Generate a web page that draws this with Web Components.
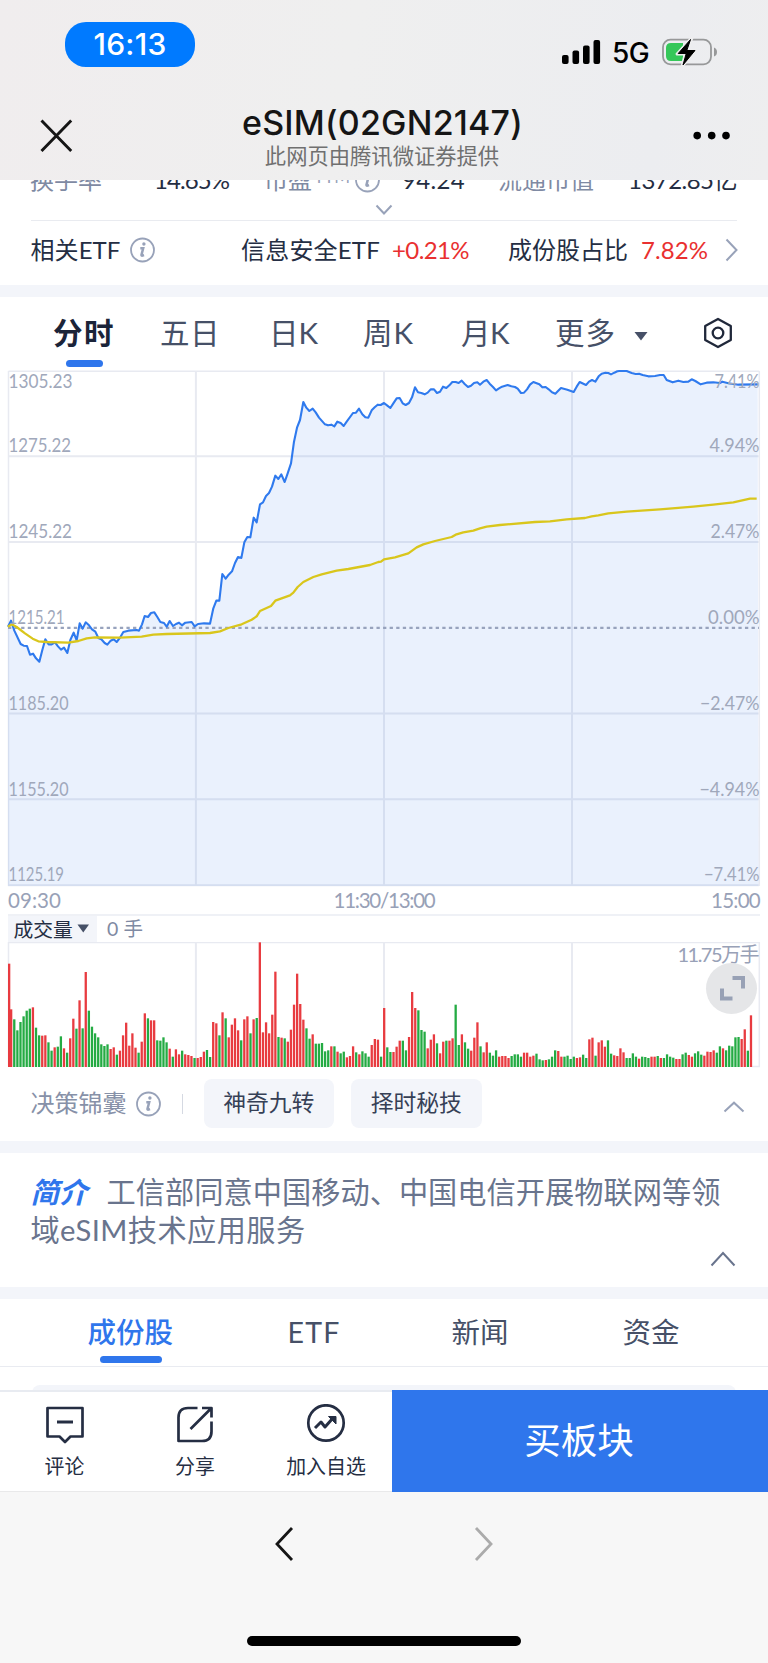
<!DOCTYPE html>
<html lang="zh-CN">
<head>
<meta charset="utf-8">
<title>eSIM(02GN2147)</title>
<style>
html,body{margin:0;padding:0}
body{width:768px;height:1663px;overflow:hidden;background:#fff;font-family:Lato,"Noto Sans CJK SC",sans-serif;color:#252e43}
</style>
</head>
<body>
<quote-page></quote-page>
<script>
const define = (name, html, init) => {
  const t = document.createElement('template');
  t.innerHTML = html;
  customElements.define(name, class extends HTMLElement {
    connectedCallback() {
      if (this.shadowRoot) return;
      this.attachShadow({mode: 'open'}).append(t.content.cloneNode(true));
      if (init) init.call(this, this.shadowRoot);
    }
  });
};

// A single line of text whose tracking is adjusted to an advance width (w).
define('fit-text', `<style>:host{display:block;white-space:nowrap;line-height:1.3}span{display:inline-block;white-space:pre}</style><span><slot></slot></span>`, function (r) {
  const w = +this.getAttribute('w');
  if (!w) return;
  const s = r.querySelector('span'), n = this.textContent.length;
  s.style.letterSpacing = (w - s.getBoundingClientRect().width) / n + 'px';
});

define('info-icon', `<style>:host{display:block;width:26px;height:26px;color:#98a2b9}svg{display:block}</style>
<svg width="26" height="26" viewBox="0 0 26 26" fill="none" stroke="currentColor"><circle cx="12.500" cy="13" r="11.5" stroke-width="1.8"/><circle cx="13.900" cy="7" r="1.700" fill="currentColor" stroke="none"/><path d="M10.300 11.200h2.900l-1.700 6.500q-.2 1.200 1 .9l1.500-.6" stroke-width="2.500"/></svg>`);

define('status-bar', `<style>
:host{display:flex;height:96px;justify-content:space-between;align-items:flex-start;padding:21.500px 51px 0 65px;box-sizing:border-box;font-family:Inter,sans-serif;color:#000}
.time{width:130px;height:45px;border-radius:21px;background:#007aff;color:#fff;display:flex;align-items:center;justify-content:center;font-size:30px;font-weight:500}
.r{display:flex;align-items:center;margin-top:15px;height:30px}
.g{margin-left:11px;margin-right:13px;font-size:28px;font-weight:500;margin-top:3px}
svg{display:block}
</style>
<div class="time"><fit-text w="73">16:13</fit-text></div>
<div class="r">
<svg width="40" height="26" viewBox="0 0 40 26"><rect x="1" y="16" width="6.6" height="9" rx="2"/><rect x="11.5" y="11.5" width="6.6" height="13.5" rx="2"/><rect x="22" y="6.5" width="6.6" height="18.5" rx="2"/><rect x="32.5" y="1" width="6.6" height="24" rx="2"/></svg>
<div class="g"><fit-text w="37">5G</fit-text></div>
<svg width="55" height="30" viewBox="0 0 55 30"><rect x="1" y="2.7" width="48" height="24.6" rx="7.5" fill="none" stroke="#979899" stroke-width="1.8"/><path d="M52 10.5q3 1 3 4.5t-3 4.5z" fill="#979899"/><path d="M9 6h12v18H9q-5 0-5-5v-8q0-5 5-5z" fill="#35c759"/><path d="M29.8 1 15.2 17h8.2L20.2 29 33.2 13.5h-8z" stroke="#eeeeef" stroke-width="3.2" stroke-linejoin="round"/><path d="M28.5 2.5 16.2 16.5h8L21 28 33 13.5h-8.2z" stroke="#000" stroke-linejoin="round"/></svg>
</div>`);

define('nav-bar', `<style>
:host{display:grid;grid-template-columns:92px 1fr 92px;height:84px;color:#151515}
.t{display:flex;flex-direction:column;align-items:center;font-family:Inter,"Noto Sans CJK SC",sans-serif;padding-top:5px}
.t .a{font-size:34px;font-weight:450;line-height:43px;height:43px;margin-left:-3px}.t .a fit-text{line-height:43px}
.t .b{font-size:21.3px;color:#707070;line-height:28px;margin-top:-2px;margin-left:-4px}
svg{display:block}
</style>
<svg width="92" height="84"><path d="M41.5 24.500l29.700 30.5M71.2 24.500l-29.700 30.5" stroke="#151515" stroke-width="2.9" fill="none"/></svg>
<div class="t"><div class="a"><fit-text w="281">eSIM(02GN2147)</fit-text></div><div class="b">此网页由腾讯微证券提供</div></div>
<svg width="92" height="84"><circle cx="21.2" cy="39.6" r="3.8"/><circle cx="35.7" cy="39.6" r="3.8"/><circle cx="50" cy="39.6" r="3.8"/></svg>`);

define('quote-summary', `<style>
:host{display:block;height:104.500px;overflow:hidden;padding:0 31px;box-sizing:border-box;font-size:24px}
.row{display:grid;align-items:center;height:36px}
.m{grid-template-columns:123px 111px 49px 41px 47px 97px 129px auto;margin-top:-18px}
.m .k{color:#7f8aa3;margin-left:-1px}
.m sup{font-size:17px;line-height:17px;align-self:start;color:#98a2b9;margin-top:5.500px}
.m fit-text,.e fit-text{line-height:36px}
.fold{display:flex;justify-content:center;height:22px;padding-top:5px;box-sizing:border-box;margin-top:0}
.fold svg{margin-top:1px}
hr{border:0;border-top:1.5px solid #e9ebf0;margin:0;height:0}
.e{grid-template-columns:99px 111px 151px 116px 133px 84px auto;margin-top:10.500px}
.e fit-text:first-child{margin-left:-.5px}
.red{color:#e93030}
svg{display:block}
</style>
<div class="row m"><fit-text class="k">换手率</fit-text><fit-text w="75">14.65%</fit-text><fit-text class="k">市盈</fit-text><sup><fit-text w="36" style="line-height:17px">TTM</fit-text></sup><info-icon></info-icon><fit-text w="63">94.24</fit-text><fit-text class="k">流通市值</fit-text><fit-text w="109">1372.85亿</fit-text></div>
<div class="fold"><svg width="18" height="12" viewBox="0 0 18 12"><path d="M1.5 1.5 9 9.500l7.500-8" fill="none" stroke="#98a2b9" stroke-width="2"/></svg></div>
<hr>
<div class="row e"><fit-text w="90">相关ETF</fit-text><info-icon></info-icon><fit-text w="139">信息安全ETF</fit-text><fit-text class="red" w="77">+0.21%</fit-text><fit-text>成份股占比</fit-text><fit-text class="red" w="67">7.82%</fit-text><svg width="14" height="24" viewBox="0 0 14 24"><path d="M1.500 1.500 11.500 12l-10 10.500" fill="none" stroke="#98a2b9" stroke-width="2"/></svg></div>`);

define('section-gap', `<style>:host{display:block;height:12.500px;background:#f3f5fa}</style>`);

define('period-tabs', `<style>
:host{display:grid;height:73px;box-sizing:border-box;padding-left:53px;grid-template-columns:107px 109px 94px 98px 94px 76px 69px auto;font-size:29.5px;color:#465067;align-items:start}
fit-text{line-height:71px}
.on{color:#1b2439;font-weight:600;position:relative}
.on i{position:absolute;left:13px;top:63px;width:37px;height:6.500px;border-radius:3.500px;background:#2f76ec}
svg{display:block}
</style>
<div class="on"><fit-text w="62">分时</fit-text><i></i></div><fit-text w="60">五日</fit-text><fit-text w="49">日K</fit-text><fit-text w="51">周K</fit-text><fit-text w="48">月K</fit-text><fit-text w="61">更多</fit-text>
<svg width="20" height="72"><path d="M3.500 35h13l-6.500 8.500z" fill="#465067"/></svg>
<svg width="36" height="72" viewBox="0 0 36 72" fill="none" stroke="#20283a" stroke-width="2.300" stroke-linejoin="round"><path d="M18 22 30.800 29v14L18 50 5.200 43v-14z"/><circle cx="18" cy="36" r="5.300"/></svg>`);

// Line samples: offsets are kept at a third of a pixel.
const series = parts => parts.map(([dx, s]) => s.split(' ').map(p => {
  const [x, y] = p.split(',');
  return ((+x + dx) / 3).toFixed(2) + ',' + (+y / 3 + 360).toFixed(2);
}).join(' ')).join(' ');
const price = series([
[0,'24,800 33,782 43,812 62,852 71,857 81,858 90,884 99,881 108,895 118,905 127,870 136,838 146,853 155,853 165,847 174,859 183,869 192,863 202,879 211,840 221,818 230,841 239,790 248,806 257,787 267,796 276,808 286,815 295,834 304,838 314,849 322,854 332,842 341,838 350,846 360,833 370,816 385,812 410,810 417,812 426,793 434,768 444,771 453,759 463,757 472,771 481,786 492,789 500,800 509,783 519,798 528,792 537,788 546,796 556,788 575,786 584,799 594,792 612,790 630,791 640,745 649,722 658,722 667,642 677,656 686,644 696,634 705,609 714,591 724,594 733,547 742,531 751,532 761,473 770,487'],
[600,'180,433 189,427 198,408 207,399 216,380 226,347 235,357 244,343 254,366 263,340 273,310 282,245 291,203 300,180 310,126 319,143 328,153 338,146 347,157 357,173 375,193 384,196 394,194 403,199 412,185 422,189 431,198 440,185 459,159 468,158 477,146 487,163 496,172 505,173 515,151 524,142 533,134 542,135 552,129 562,137 571,144 580,130 590,115 599,114 608,130 617,135 627,129 636,112 645,82 654,97 664,99 674,103 683,98 692,88 702,88 711,99 720,95 729,80 739,84 748,76 757,66 767,66 776,69 785,62 794,72 804,81 813,77 822,69 832,67 840,74'],
[1380,'70,65 80,60 89,71 99,81 108,91 117,85 126,80 143,75 154,79 165,81 173,86 183,99 192,98 201,88 210,74 220,66 230,70 238,73 247,82 257,81 266,88 276,97 286,101 294,93 303,84 322,89 341,96 350,80 359,66 378,75 387,65 396,60 406,65 416,49 425,41 436,38 445,39 453,43 463,38 472,34 485,32 500,33 515,39 527,42 537,41 548,45 565,49 585,48 600,45 611,45 620,60 638,67 655,62 670,66 685,65 695,58 706,63 722,73 740,68 760,67 780,69 787,65 805,70 835,74 893,73']]);
const average = series([
[0,'24,800 35,793 50,801 75,820 98,836 115,844 140,846 205,848 235,843 260,835 285,832 360,833 425,830 460,824 500,822 630,819 660,814 685,804 725,793 755,779 770,769'],
[600,'180,753 213,738 226,722 270,706 280,698 293,681 310,666 340,651 365,643 410,632 445,627 510,615 535,606 543,605 552,598 585,592 625,580 650,562 670,553 705,543 755,531 767,524 790,517 820,512 840,505'],
[1380,'80,500 120,495 225,486 270,484 320,478 375,474 395,469 415,466 445,460 500,455 600,448 700,440 760,434 820,427 870,416 890,416']]);

define('price-chart', `<style>:host{display:block;height:517px}svg{display:block}text{font-family:Lato,sans-serif;font-size:19px;fill:#a0a8bb}</style><svg width="768" height="517" viewBox="0 370 768 517"></svg>`, function (r) {
  const ys = [388, 452, 538, 623.5, 710, 795.5, 881];
  const L = [['1305.23',64],['1275.22',62.500],['1245.22',63.500],['1215.21',56],['1185.20',60],['1155.20',60],['1125.19',55.500]];
  const R = [['7.41%',45],['4.94%',50],['2.47%',49],['0.00%',51.500],['−2.47%',59.500],['−4.94%',60],['−7.41%',55.500]];
  let s = '<g stroke="#e8eaf1" fill="none"><path stroke-width="1.500" d="M8.500 371.200H759.300M8.500 371V886M759.300 371V886"/><path stroke-width="2" d="M8 456.300H759M8 542H759M8 713.500H759M8 799.300H759M8 885.300H759M195.900 371V885M384 371V885M572 371V885"/></g>';
  s += `<polygon points="8,886 ${price} 758.500,886" fill="#2f76ec" fill-opacity=".1"/>`;
  s += '<path d="M8 627.800H759" stroke="#98a3bd" stroke-width="2.200" stroke-dasharray="3.300 3.280" fill="none"/>';
  s += `<polyline points="${price}" fill="none" stroke="#2f7aee" stroke-width="2.100" stroke-linejoin="round"/><polyline points="${average}" fill="none" stroke="#d9c61c" stroke-width="2.300" stroke-linejoin="round"/>`;
  L.forEach(([t, w], i) => s += `<text x="8.500" y="${ys[i]}" textLength="${w}" lengthAdjust="spacingAndGlyphs">${t}</text>`);
  R.forEach(([t, w], i) => s += `<text x="${759.5 - w}" y="${ys[i]}" textLength="${w}" lengthAdjust="spacingAndGlyphs">${t}</text>`);
  r.querySelector('svg').innerHTML = s;
});

define('time-axis', `<style>:host{display:grid;grid-template-columns:1fr auto 1fr;height:27px;padding:0 8px;font-size:20.500px;color:#98a1b7}fit-text{line-height:27px}fit-text:last-child{justify-self:end}</style>
<fit-text w="53">09:30</fit-text><fit-text w="101">11:30/13:00</fit-text><fit-text w="49">15:00</fit-text>`);

define('volume-head', `<style>:host{display:flex;height:28px;margin:0 8px;box-sizing:border-box;border-top:2px solid #eff1f6;font-size:19.800px}
.k{display:flex;align-items:center;width:89px;box-sizing:border-box;padding-left:5.500px;background:#f3f5fa}
.v{margin-left:10px;color:#7f8aa3;font-size:19.500px}fit-text{line-height:25px}</style>
<div class="k"><fit-text>成交量</fit-text><svg width="16" height="12"><path d="M4.500 1.500h11.500l-5.750 8z" fill="#465067"/></svg></div><fit-text class="v" w="36">0 手</fit-text>`);

// One entry per minute: r = rise, g = fall, followed by the bar top in thirds of a pixel.
const bars = 'r101 r238 g268 g301 g276 g259 g242 g236 r232 g293 g316 r317 r316 g337 g362 r352 g350 g319 r355 g368 r325 r266 g296 r211 g295 r126 g242 g290 g310 g322 g343 g348 g343 r357 r352 g374 r362 r316 r278 r347 r310 r353 g368 r335 r250 g265 r271 r271 g331 g332 g322 g337 r356 g380 r358 r373 g362 r373 r375 r378 g384 r384 r381 r365 g360 g381 r276 r280 g316 r247 g265 r322 r284 r265 r301 g331 r268 r259 g310 r268 g264 r37 r307 r277 r310 r254 r125 g321 r323 g325 r335 r299 r224 r131 r222 r269 g295 g326 r313 g341 g341 g339 g364 g361 r349 g349 r365 g370 g365 r382 r378 r349 g367 r373 g364 g370 g380 r345 r327 r329 g380 r234 g352 g366 r366 r350 r332 g332 g361 r321 r186 r234 g241 g300 g305 r355 r329 r313 g340 r370 r335 g332 r332 r325 g224 g345 r313 g337 g356 r362 r323 r277 g349 r367 r337 g368 g377 g361 r380 r378 r378 r384 g378 g373 g373 g380 r368 r368 r380 r377 g371 g388 g391 r390 g388 g380 g361 r363 r380 g380 g377 g387 g380 r384 r382 g374 g384 r328 r323 g377 r337 r331 r350 g331 g371 r376 r378 r355 r367 g384 g384 g370 g380 r386 g380 g381 g384 r380 r380 g378 r384 g384 g373 g380 g383 r387 r387 g373 g368 r375 r380 g370 g364 g374 r377 r365 r366 r361 g368 g349 r355 g361 g347 g349 g322 g321 r327 r298 g362 r256'.split(' ');

define('volume-chart', `<style>:host{display:block;height:126px;position:relative}svg{display:block}text{font-family:Lato,"Noto Sans CJK SC",sans-serif;font-size:20px;fill:#98a1b7}
button{position:absolute;left:706px;top:21px;width:51px;height:51px;border:0;padding:0;border-radius:50%;background:#e5e6e8}</style>
<svg id="c" width="768" height="126" viewBox="0 942 768 126"></svg>
<button aria-label="全屏"><svg width="51" height="51" fill="none" stroke="#98a1b5" stroke-width="4"><path d="M26.500 15H37V25.500M16 25.500V35.500H26.500"/></svg></button>`, function (r) {
  let s = '<path d="M8 942.500H759.300M8.500 942V1066.500M759.300 942V1066.500H752" stroke="#e8eaf1" stroke-width="1.500" fill="none"/><path d="M195.900 942V1066M384 942V1066M572 942V1066" stroke="#e8eaf1" stroke-width="2" fill="none"/>';
  bars.forEach((b, i) => {
    const y = 930 + b.slice(1) / 3;
    s += `<rect x="${(8 + i * 3.1085 - (i ? 1.1 : 0)).toFixed(2)}" y="${y.toFixed(2)}" width="2.300" height="${(1067 - y).toFixed(2)}" fill="${b[0] === 'r' ? '#e83b40' : '#24ab43'}"/>`;
  });
  s += '<text x="677.500" y="962" textLength="82">11.75万手</text>';
  r.querySelector('#c').innerHTML = s;
});

define('decision-row', `<style>:host{display:flex;height:72.500px;padding:0 23px 0 30.500px;align-items:flex-start;box-sizing:border-box}
.k{font-size:24px;color:#8791a8;line-height:70px}.b fit-text{line-height:46px}
info-icon{margin:22.500px 0 0 9.500px}
i{width:1px;height:20px;background:#d5d9e2;margin:26px 20.500px 0 20px}
.b{width:130.500px;height:49px;border-radius:8px;background:#f3f5fa;margin:11px 17px 0 0;display:flex;justify-content:center;font-size:22.800px;color:#364056}
svg{margin:32.500px 0 0 auto}</style>
<fit-text class="k">决策锦囊</fit-text><info-icon></info-icon><i></i><div class="b"><fit-text>神奇九转</fit-text></div><div class="b"><fit-text>择时秘技</fit-text></div>
<svg width="22" height="12" viewBox="0 0 22 12"><path d="M1.500 10.500 11 1.700l9.500 8.800" fill="none" stroke="#98a2b9" stroke-width="2"/></svg>`);

define('intro-card', `<style>:host{display:flex;flex-direction:column;height:134px;box-sizing:border-box;padding:20px 32px 0 30.500px;color:#69748d;font-size:29.200px}
.l{display:flex;height:38px}fit-text{line-height:38px}.l b{font-size:28.500px;line-height:38px;color:#2f76ec;font-style:italic;width:76px}
svg{align-self:flex-end;margin-top:2px}</style>
<div class="l"><b>简介</b><fit-text w="614">工信部同意中国移动、中国电信开展物联网等领</fit-text></div>
<div class="l"><fit-text w="275">域eSIM技术应用服务</fit-text></div>
<svg width="26" height="16" viewBox="0 0 26 16"><path d="M1.500 14.500 13 2l11.500 12.500" fill="none" stroke="#69748d" stroke-width="2"/></svg>`);

define('detail-tabs', `<style>:host{display:block;height:90.500px;overflow:hidden}
nav{display:grid;grid-template-columns:200px 164px 171px auto;padding-left:87.500px;height:68px;box-sizing:border-box;border-bottom:1.500px solid #e9ebf1;font-size:28.500px;color:#465067}
fit-text{line-height:66px}.on{color:#2f76ec;font-weight:500;position:relative}.on i{position:absolute;left:12px;top:57px;width:62.500px;height:6.500px;border-radius:3.500px;background:#2f76ec}
.p{margin:17.500px 32px 0;height:20px;border-radius:8px;background:#f3f5fa}</style>
<nav><div class="on"><fit-text>成份股</fit-text><i></i></div><fit-text w="53">ETF</fit-text><fit-text>新闻</fit-text><fit-text>资金</fit-text></nav><div class="p"></div>`);

define('action-item', `<style>:host{display:flex;flex-direction:column;align-items:center;font-size:19.900px;color:#252e43;padding-top:12.500px;margin-left:-1px}fit-text{line-height:26px;margin-top:9px}</style><slot name="icon"></slot><fit-text><slot></slot></fit-text>`);

define('action-bar', `<style>:host{display:flex;height:102.500px}
.l{display:grid;grid-template-columns:130px 131px 131px;width:392px;border-top:2px solid #e8ebf1;border-bottom:1px solid #e9e9ea;box-sizing:border-box}
.buy{flex:1;display:flex;align-items:center;justify-content:center;background:#2f76ec;color:#fff;font-size:36.500px;box-sizing:border-box;padding-right:2px}
svg{display:block;fill:none;stroke:#252e43;stroke-width:2.700;stroke-linejoin:round}</style>
<div class="l">
<action-item><svg slot="icon" width="40" height="40" viewBox="0 0 40 40"><path d="M2.500 4h35v28.500H25.500L20 38l-5.500-5.500h-12z"/><path d="M12 18h16" stroke-width="3"/></svg>评论</action-item>
<action-item><svg slot="icon" width="40" height="40" viewBox="0 0 40 40"><path d="M22.500 4H13Q3.500 4 3.500 13.500V37H27Q36.500 37 36.500 27.500V17.500M27 4h9.500v9.500M35.500 5 15.500 25"/></svg>分享</action-item>
<action-item><svg slot="icon" width="40" height="40" viewBox="0 0 40 40"><circle cx="20" cy="19" r="17.700"/><path d="M9 24l6-6 4 5 8-9" stroke-width="3"/><path d="M22.500 12.500h7.500v7.500z" fill="#252e43" stroke-width="1"/></svg>加入自选</action-item>
</div><div class="buy"><fit-text>买板块</fit-text></div>`);

define('browser-foot', `<style>:host{display:block;height:170.500px;background:#f7f7f7;overflow:hidden}
.n{display:flex;justify-content:center;gap:176px;padding-top:34px;height:110px}
.h{width:274px;height:10px;border-radius:5px;background:#000;margin:0 auto}svg{display:block}</style>
<div class="n"><svg width="22" height="36" viewBox="0 0 22 36"><path d="M18 2 3 18l15 16" fill="none" stroke="#151515" stroke-width="2.800"/></svg><svg width="22" height="36" viewBox="0 0 22 36"><path d="M4 2l15 16L4 34" fill="none" stroke="#ababab" stroke-width="2.800"/></svg></div><div class="h"></div>`);

define('quote-page', `<style>:host{display:flex;flex-direction:column;width:768px;height:1663px;background:#fff}
header{height:180px;position:relative;z-index:1;background:linear-gradient(100deg,#f0edee,#efefef 45%,#ecedf0 85%,#eeeeef)}
header,:host>*{flex:none}</style>
<header><status-bar></status-bar><nav-bar></nav-bar></header>
<quote-summary></quote-summary><section-gap></section-gap>
<period-tabs></period-tabs><price-chart></price-chart><time-axis></time-axis><volume-head></volume-head><volume-chart></volume-chart><decision-row></decision-row>
<section-gap></section-gap><intro-card></intro-card><section-gap style="height:12px"></section-gap>
<detail-tabs></detail-tabs><action-bar></action-bar><browser-foot></browser-foot>`);
</script>
</body>
</html>
